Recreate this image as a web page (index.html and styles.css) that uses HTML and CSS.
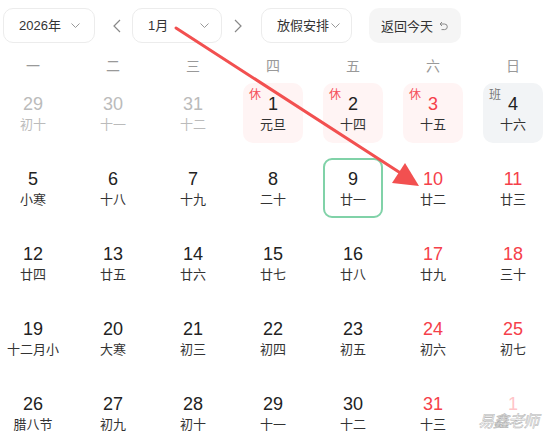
FILE: index.html
```html
<!DOCTYPE html>
<html lang="zh">
<head>
<meta charset="utf-8">
<link rel="stylesheet" href="styles.css">
</head>
<body>
<div class="page">
  <div class="toolbar">
    <div class="select year"><span>2026年</span><svg class="caret" width="9" height="5" viewBox="0 0 9 5"><path d="M0.5 0.5 L4.5 4.5 L8.5 0.5" fill="none" stroke="#999" stroke-width="1"/></svg></div>
    <svg class="nav prev" width="8" height="14" viewBox="0 0 8 14"><path d="M7 1 L1 7 L7 13" fill="none" stroke="#888" stroke-width="1.2"/></svg>
    <div class="select month"><span>1月</span><svg class="caret" width="9" height="5" viewBox="0 0 9 5"><path d="M0.5 0.5 L4.5 4.5 L8.5 0.5" fill="none" stroke="#999" stroke-width="1"/></svg></div>
    <svg class="nav next" width="8" height="14" viewBox="0 0 8 14"><path d="M1 1 L7 7 L1 13" fill="none" stroke="#888" stroke-width="1.2"/></svg>
    <div class="select holiday"><span>放假安排</span><svg class="caret" width="9" height="5" viewBox="0 0 9 5"><path d="M0.5 0.5 L4.5 4.5 L8.5 0.5" fill="none" stroke="#999" stroke-width="1"/></svg></div>
    <div class="today-btn"><span>返回今天</span><svg class="back" width="9" height="10" viewBox="0 0 9 10"><path d="M3 1 L1 3 L3 5 M1 3 H5.5 A2.8 2.8 0 0 1 5.5 8.6 H2.5" fill="none" stroke="#888" stroke-width="1"/></svg></div>
  </div>

  <div class="weekdays">
    <div>一</div><div>二</div><div>三</div><div>四</div><div>五</div><div>六</div><div>日</div>
  </div>

  <div class="grid">
    <div class="cell other"><div class="num">29</div><div class="lunar">初十</div></div>
    <div class="cell other"><div class="num">30</div><div class="lunar">十一</div></div>
    <div class="cell other"><div class="num">31</div><div class="lunar">十二</div></div>
    <div class="cell rest"><span class="tag">休</span><div class="num">1</div><div class="lunar">元旦</div></div>
    <div class="cell rest"><span class="tag">休</span><div class="num">2</div><div class="lunar">十四</div></div>
    <div class="cell rest"><span class="tag">休</span><div class="num red">3</div><div class="lunar">十五</div></div>
    <div class="cell work"><span class="tag">班</span><div class="num">4</div><div class="lunar">十六</div></div>

    <div class="cell"><div class="num">5</div><div class="lunar">小寒</div></div>
    <div class="cell"><div class="num">6</div><div class="lunar">十八</div></div>
    <div class="cell"><div class="num">7</div><div class="lunar">十九</div></div>
    <div class="cell"><div class="num">8</div><div class="lunar">二十</div></div>
    <div class="cell selected"><div class="num">9</div><div class="lunar">廿一</div></div>
    <div class="cell"><div class="num red">10</div><div class="lunar">廿二</div></div>
    <div class="cell"><div class="num red">11</div><div class="lunar">廿三</div></div>

    <div class="cell"><div class="num">12</div><div class="lunar">廿四</div></div>
    <div class="cell"><div class="num">13</div><div class="lunar">廿五</div></div>
    <div class="cell"><div class="num">14</div><div class="lunar">廿六</div></div>
    <div class="cell"><div class="num">15</div><div class="lunar">廿七</div></div>
    <div class="cell"><div class="num">16</div><div class="lunar">廿八</div></div>
    <div class="cell"><div class="num red">17</div><div class="lunar">廿九</div></div>
    <div class="cell"><div class="num red">18</div><div class="lunar">三十</div></div>

    <div class="cell"><div class="num">19</div><div class="lunar">十二月小</div></div>
    <div class="cell"><div class="num">20</div><div class="lunar">大寒</div></div>
    <div class="cell"><div class="num">21</div><div class="lunar">初三</div></div>
    <div class="cell"><div class="num">22</div><div class="lunar">初四</div></div>
    <div class="cell"><div class="num">23</div><div class="lunar">初五</div></div>
    <div class="cell"><div class="num red">24</div><div class="lunar">初六</div></div>
    <div class="cell"><div class="num red">25</div><div class="lunar">初七</div></div>

    <div class="cell"><div class="num">26</div><div class="lunar">腊八节</div></div>
    <div class="cell"><div class="num">27</div><div class="lunar">初九</div></div>
    <div class="cell"><div class="num">28</div><div class="lunar">初十</div></div>
    <div class="cell"><div class="num">29</div><div class="lunar">十一</div></div>
    <div class="cell"><div class="num">30</div><div class="lunar">十二</div></div>
    <div class="cell"><div class="num red">31</div><div class="lunar">十三</div></div>
    <div class="cell other-red"><div class="num">1</div></div>
  </div>

  <svg class="arrow" width="548" height="439" viewBox="0 0 548 439">
    <line x1="176" y1="28" x2="402" y2="174" stroke="#f25050" stroke-width="3" stroke-linecap="round"/>
    <polygon points="419,186 392,183 405,163" fill="#f25050"/>
  </svg>
  <div class="watermark">易鑫老师</div>
</div>
</body>
</html>
```

FILE: styles.css
```css
* { box-sizing: border-box; }
html, body { margin: 0; padding: 0; background: #fff; }
body {
  font-family: "Liberation Sans", "Noto Sans CJK SC", sans-serif;
  color: #222;
  width: 548px;
  height: 439px;
  overflow: hidden;
}
.page { position: relative; width: 548px; height: 439px; padding: 8px 0 0 3px; }

.toolbar { display: flex; align-items: center; height: 35px; }
.select {
  display: flex; align-items: center; justify-content: space-between;
  height: 35px; border: 1px solid #ececec; border-radius: 10px;
  padding: 0 14px 0 15px; font-size: 13px; color: #333; white-space: nowrap;
}
.select span { line-height: 20px; }
.year { width: 92px; }
.month { width: 90px; padding-right: 12px; }
.holiday { width: 91px; padding: 0 11px 0 15px; margin-left: 1px; }
.nav.prev { margin: 0 11px 0 18px; }
.nav.next { margin: 0 18px 0 12px; }
.today-btn {
  display: flex; align-items: center; gap: 6px;
  margin-left: 17px; width: 92px; height: 35px;
  background: #f5f5f5; border-radius: 10px; padding-left: 12px;
  font-size: 13px; color: #333; white-space: nowrap;
}

.weekdays {
  display: grid; grid-template-columns: repeat(7, 60px); column-gap: 20px;
  margin-top: 13px; height: 20px; line-height: 20px;
  font-size: 14px; color: #999; text-align: center;
}

.grid {
  display: grid; grid-template-columns: repeat(7, 60px); grid-auto-rows: 60px;
  column-gap: 20px; row-gap: 15px; margin-top: 7px;
}
.cell {
  position: relative; display: flex; flex-direction: column; align-items: center;
  padding-top: 10px; border-radius: 10px;
}
.num { font-size: 18px; line-height: 22px; color: #222; }
.lunar { font-size: 13px; line-height: 20px; color: #333; white-space: nowrap; }
.num.red { color: #f5404a; }
.other .num, .other .lunar { color: #bbb; }
.other-red .num { color: #ffc4c8; line-height: 16px; margin-top: 3px; }
.rest { background: #fff4f4; }
.work { background: #f2f4f6; }
.tag { position: absolute; left: 6px; top: 5px; font-size: 12px; line-height: 14px; color: #f5505a; }
.work .tag { color: #777; }
.selected { border: 2px solid #80d2a8; border-radius: 9px; padding-top: 8px; }

.arrow { position: absolute; left: 0; top: 0; pointer-events: none; }
.watermark {
  position: absolute; left: 478px; top: 414px;
  font-size: 16px; line-height: 16px; font-style: italic;
  color: #fff; -webkit-text-stroke: 0.5px #b0b0b0; letter-spacing: -1px;
}
```
